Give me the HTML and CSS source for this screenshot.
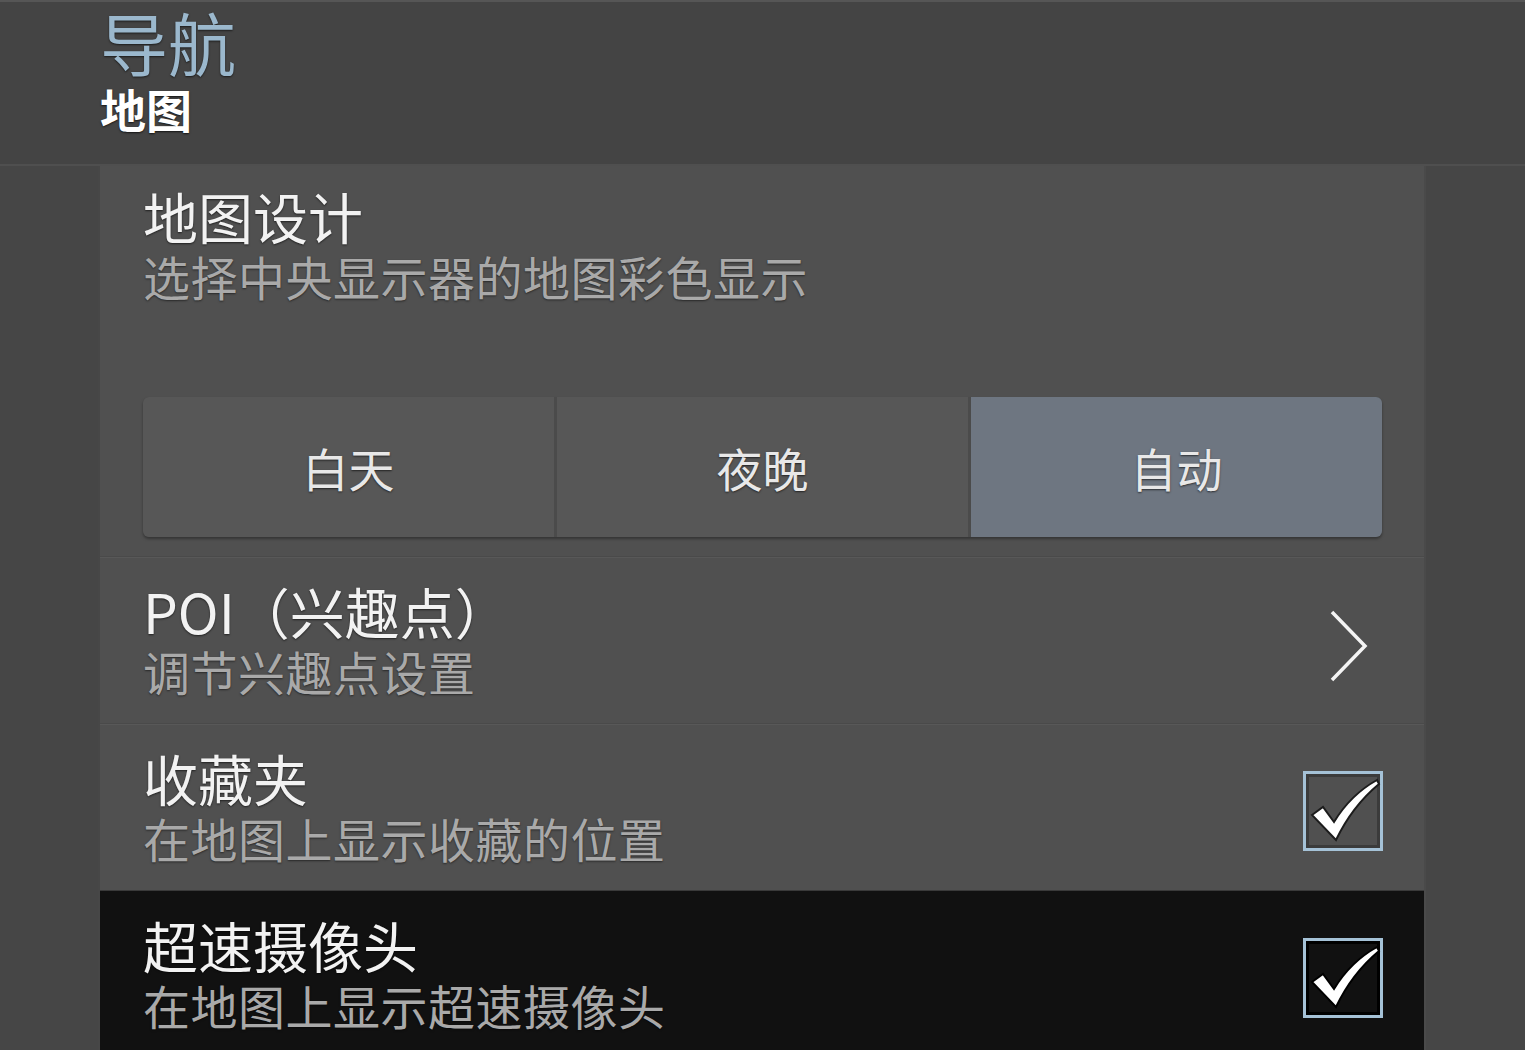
FILE: index.html
```html
<!DOCTYPE html>
<html lang="zh-CN">
<head>
  <meta charset="UTF-8">
  <title>导航 - 地图</title>
  <link rel="stylesheet" href="styles.css">
</head>
<body>
  <header class="topbar">
    <div class="topbar-title">导航</div>
    <div class="topbar-sub">地图</div>
  </header>

  <div class="panel">
    <section class="item item-design">
      <div class="item-title">地图设计</div>
      <div class="item-desc">选择中央显示器的地图彩色显示</div>
      <div class="segments">
        <div class="seg">白天</div>
        <div class="seg">夜晚</div>
        <div class="seg seg-on">自动</div>
      </div>
    </section>

    <section class="item row">
      <div class="row-text">
        <div class="item-title">POI（兴趣点）</div>
        <div class="item-desc">调节兴趣点设置</div>
      </div>
      <svg class="chevron" width="40" height="74" viewBox="0 0 40 74">
        <polyline points="4,3 37,37 4,71" fill="none" stroke="#f4f4f4" stroke-width="3.5"/>
      </svg>
    </section>

    <section class="item row">
      <div class="row-text">
        <div class="item-title">收藏夹</div>
        <div class="item-desc">在地图上显示收藏的位置</div>
      </div>
      <div class="checkbox">
        <svg width="80" height="80" viewBox="0 0 80 80">
          <path d="M9 44 L20 36 L31 51 C42 33 56 19 74 9 L76 13 C58 28 44 46 33 69 Z" fill="#fff" stroke="#1c1c1c" stroke-width="2"/>
        </svg>
      </div>
    </section>

    <section class="item row row-active">
      <div class="row-text">
        <div class="item-title">超速摄像头</div>
        <div class="item-desc">在地图上显示超速摄像头</div>
      </div>
      <div class="checkbox">
        <svg width="80" height="80" viewBox="0 0 80 80">
          <path d="M9 44 L20 36 L31 51 C42 33 56 19 74 9 L76 13 C58 28 44 46 33 69 Z" fill="#fff" stroke="#000" stroke-width="2"/>
        </svg>
      </div>
    </section>
  </div>
</body>
</html>
```

FILE: styles.css
```css
html, body {
  margin: 0;
  height: 100%;
}

body {
  font-family: "Noto Sans CJK SC", "Noto Sans", sans-serif;
  background: #464646;
  color: #f0f0f0;
  overflow: hidden;
}

.topbar {
  padding: 2px 0 0 100px;
  background: #444444;
  border-top: 2px solid #565656;
  border-bottom: 2px solid #4f4f4f;
  box-sizing: border-box;
  height: 166px;
}

.topbar-title {
  font-size: 68px;
  line-height: 76px;
  color: #9bb8cd;
  text-shadow: 0 1px 2px rgba(0, 0, 0, 0.6);
}

.topbar-sub {
  font-size: 46px;
  line-height: 56px;
  font-weight: bold;
  color: #ffffff;
  text-shadow: 0 1px 2px rgba(0, 0, 0, 0.7);
}

.panel {
  margin-left: 98px;
  width: 1328px;
  background: #505050;
  border-left: 2px solid #474747;
  border-right: 2px solid #4a4a4a;
  box-sizing: border-box;
  min-height: 884px;
}

.item {
  padding: 0 42px 0 43px;
  border-top: 1px solid #4a4a4a;
  box-shadow: inset 0 1px 0 #585858;
}

.item-design {
  padding-top: 19px;
  padding-bottom: 19px;
  border-top: none;
  box-shadow: none;
}

.item-title {
  font-size: 55px;
  line-height: 60px;
  color: #f2f2f2;
  text-shadow: 0 1px 2px rgba(0, 0, 0, 0.6);
  white-space: nowrap;
}

.item-desc {
  font-size: 47px;
  line-height: 62px;
  letter-spacing: 0.5px;
  color: #a9a9a9;
  text-shadow: 0 1px 2px rgba(0, 0, 0, 0.5);
  white-space: nowrap;
}

.segments {
  display: flex;
  margin-top: 90px;
  height: 140px;
  border-radius: 6px;
  overflow: hidden;
  box-shadow: 0 2px 3px rgba(0, 0, 0, 0.35);
  gap: 3px;
  background: #4b4b4b;
}

.seg {
  flex: 1;
  display: flex;
  align-items: center;
  justify-content: center;
  background: #575757;
  font-size: 46px;
  color: #e8e8e8;
  text-shadow: 0 1px 2px rgba(0, 0, 0, 0.6);
}

.seg-on {
  background: #6e7681;
}

.row {
  display: flex;
  align-items: center;
  height: 167px;
  box-sizing: border-box;
}

.row-text {
  flex: 1;
  padding-top: 2px;
}

.row-active {
  background: #111111;
  border-top-color: #3a3a3a;
  box-shadow: none;
}

.chevron {
  margin: 12px 14px 0 0;
}

.checkbox {
  width: 80px;
  height: 80px;
  box-sizing: border-box;
  border: 3px solid #a5c2d7;
  box-shadow: inset 0 0 0 3px #3b3b3b;
  margin: 8px -1px 0 0;
}

.checkbox svg {
  display: block;
  margin: -3px;
}

.row-active .checkbox {
  box-shadow: inset 0 0 0 3px #000;
}
```
